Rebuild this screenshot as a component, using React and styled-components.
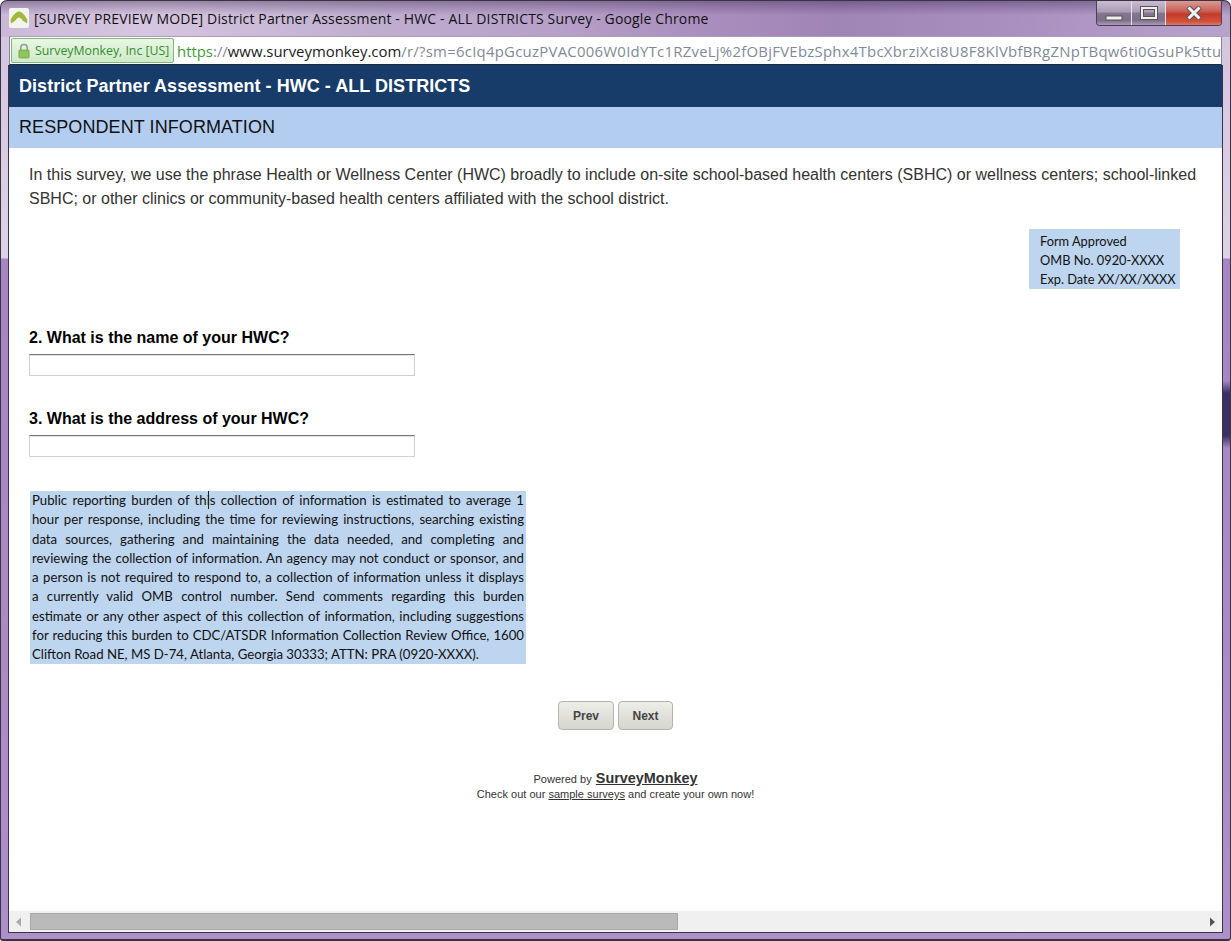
import React from 'react';
import styled, { createGlobalStyle } from 'styled-components'

const GlobalStyle = createGlobalStyle`
  html, body { margin: 0; padding: 0; background: #fff; }
  body { font-family: "Liberation Sans", Arial, sans-serif; overflow: hidden; }
`

const Window = styled.div`
  box-sizing: border-box;
  width: 1231px;
  height: 941px;
  display: flex;
  flex-direction: column;
  padding: 0 8px 6px 8px;
  border: 1px solid #3a3340;
  border-bottom-width: 2px;
  border-radius: 7px 7px 3px 3px;
  background:
    linear-gradient(180deg, transparent 380px, #3a3262 392px, #3a3262 435px, transparent 447px) right top / 7px 100% no-repeat,
    linear-gradient(180deg, rgba(60,40,80,0.4), rgba(60,40,80,0) 14px) left top / 100% 36px no-repeat,
    linear-gradient(95deg, #cbb8d8 0%, #d6c6e0 12%, #c0aed0 30%, #b7a0c9 45%, #a88dbd 58%, #9f84b6 68%, #a98fc0 82%, #b9a2cc 100%) left top / 100% 36px no-repeat,
    linear-gradient(180deg, #d3c4de 0, #ddd2e8 257px, #a585c2 258px, #ad8fc9 100%);
`
const TitleBar = styled.div`
  display: flex;
  align-items: flex-start;
  height: 35px;
  flex: none;
`
const AppIcon = styled.svg`
  width: 20px;
  height: 20px;
  margin: 7px 5px 0 0;
  flex: none;
`
const WindowTitle = styled.div`
  font-family: "Open Sans", "Noto Sans", sans-serif;
  font-size: 14px;
  line-height: 19px;
  margin-top: 8px;
  color: #111;
  white-space: nowrap;
  letter-spacing: 0.15px;
`
const WindowButtons = styled.div`
  display: flex;
  margin-left: auto;
  height: 24px;
  border: 1px solid #4a3f55;
  border-top: none;
  border-radius: 0 0 4px 4px;
  overflow: hidden;
`
const WindowButton = styled.div`
  width: ${p => p.$w}px;
  display: flex;
  align-items: center;
  justify-content: center;
  background: ${p => p.$close
    ? 'linear-gradient(180deg, #dc9a92 0%, #c9655a 40%, #c33b28 55%, #d4503c 85%, #d8796b 100%)'
    : 'linear-gradient(180deg, #c9bcd2 0%, #ab9cb6 45%, #85758f 52%, #7d6e8a 80%, #a99ab5 100%)'};
  border-right: ${p => p.$close ? 'none' : '1px solid #e6dfea'};
`
const MinimizeGlyph = styled.svg`
  margin-top: 10px;
`
const AddressBar = styled.div`
  flex: none;
  display: flex;
  align-items: center;
  height: 29px;
  box-sizing: border-box;
  background: #fff;
  border: 1px solid #8d8398;
  border-top-color: #a9a0b3;
  border-bottom: 1px solid #1f2a3d;
  overflow: hidden;
`
const SecureBadge = styled.div`
  display: flex;
  align-items: center;
  flex: none;
  box-sizing: border-box;
  height: 25px;
  width: 163px;
  padding-left: 6px;
  gap: 5px;
  margin-left: 1px;
  background: linear-gradient(180deg, #e9f6e4, #cfeac8);
  border: 1px solid #7cb87a;
  border-radius: 2px;
  font-family: "Open Sans", "Noto Sans", sans-serif;
  font-size: 12.3px;
  color: #2f8f2b;
  white-space: nowrap;
`
const Url = styled.div`
  font-family: "Open Sans", "Noto Sans", sans-serif;
  font-size: 14.9px;
  margin-left: 3px;
  white-space: nowrap;
  color: #808a96;
`
const Https = styled.span`
  color: #3f9a3a;
`
const Host = styled.span`
  color: #222;
`
const UrlRest = styled.span`
  letter-spacing: 0.27px;
`
const Page = styled.div`
  flex: 1;
  display: flex;
  flex-direction: column;
  min-height: 0;
  background: #fff;
  border-bottom: 1px solid #3a3340;
  border-left: 1px solid #3a3340;
  border-right: 1px solid #3a3340;
  margin: 0 -1px 0 -1px;
`
const SurveyHeader = styled.div`
  flex: none;
  height: 42px;
  display: flex;
  align-items: center;
  padding-left: 10px;
  background: #173c69;
  color: #fff;
  font-size: 18px;
  font-weight: bold;
  letter-spacing: 0.04px;
`
const SectionHeader = styled.div`
  flex: none;
  height: 41px;
  display: flex;
  align-items: center;
  padding-left: 10px;
  background: #b3cdf1;
  color: #111;
  font-size: 18px;
  letter-spacing: 0.08px;
`
const Content = styled.div`
  flex: 1;
  min-height: 0;
  padding: 15px 20px 0 20px;
  display: flex;
  flex-direction: column;
`
const Intro = styled.p`
  margin: 0;
  font-size: 16px;
  line-height: 24px;
  color: #333;
`
const ApprovalBox = styled.div`
  align-self: flex-end;
  box-sizing: border-box;
  width: 151px;
  height: 60px;
  margin: 18px 22px 0 0;
  padding: 3px 0 0 11px;
  background: #bdd5ee;
  font-family: Lato, "Noto Sans", sans-serif;
  font-size: 12.8px;
  line-height: 19px;
  color: #111;
  white-space: nowrap;
`
const Question = styled.div`
  display: flex;
  flex-direction: column;
  margin-top: ${p => p.$top}px;
`
const QuestionLabel = styled.label`
  font-size: 16px;
  font-weight: bold;
  line-height: 20px;
  color: #000;
`
const TextBox = styled.div`
  box-sizing: border-box;
  width: 386px;
  height: 22px;
  margin-top: 6px;
  background: #fff;
  border: 1px solid #d0d0d0;
  border-top: 1px solid #777;
  box-shadow: inset 0 1px 1px #e2e2e2;
`
const BurdenNotice = styled.div`
  box-sizing: border-box;
  position: relative;
  width: 496px;
  height: 173px;
  margin: 34px 0 0 1px;
  padding: 0 2px;
  background: #bdd5ee;
  font-family: Lato, "Noto Sans", sans-serif;
  font-size: 13.2px;
  line-height: 19.25px;
  color: #111;
`
const NoticeLine = styled.div`
  text-align: justify;
  text-align-last: ${p => p.$last ? 'left' : 'justify'};
`
const TextCursor = styled.span`
  position: absolute;
  left: 178px;
  top: 0;
  width: 1px;
  height: 18px;
  background: #222;
`
const Nav = styled.div`
  display: flex;
  justify-content: center;
  gap: 4px;
  margin-top: 37px;
`
const NavButton = styled.button`
  box-sizing: border-box;
  width: ${p => p.$w}px;
  height: 29px;
  padding: 0;
  background: linear-gradient(180deg, #ededea, #d6d5cd);
  border: 1px solid #b4b4ac;
  border-radius: 4px;
  font-family: "Liberation Sans", Arial, sans-serif;
  font-size: 12px;
  font-weight: bold;
  color: #444;
`
const Footer = styled.div`
  margin-top: 41px;
  text-align: center;
  font-size: 11px;
  line-height: 15px;
  color: #333;
  letter-spacing: 0.01px;
`
const BrandLink = styled.a`
  font-size: 14.4px;
  font-weight: bold;
  color: #333;
  text-decoration: underline;
  margin-left: 1px;
`
const SampleLink = styled.a`
  color: #333;
  text-decoration: underline;
`
const HScroll = styled.div`
  flex: none;
  height: 21px;
  display: flex;
  align-items: center;
  background: #f0f0f0;
  box-sizing: border-box;
`
const ScrollArrow = styled.svg`
  flex: none;
  width: 21px;
  height: 10px;
`
const ScrollThumb = styled.div`
  box-sizing: border-box;
  width: 648px;
  height: 17px;
  background: #bababa;
  border: 1px solid #a8a8a8;
`
const ScrollSpace = styled.div`
  flex: 1;
`

const noticeLines = [
  'Public reporting burden of this collection of information is estimated to average 1',
  'hour per response, including the time for reviewing instructions, searching existing',
  'data sources, gathering and maintaining the data needed, and completing and',
  'reviewing the collection of information. An agency may not conduct or sponsor, and',
  'a person is not required to respond to, a collection of information unless it displays',
  'a currently valid OMB control number. Send comments regarding this burden',
  'estimate or any other aspect of this collection of information, including suggestions',
  'for reducing this burden to CDC/ATSDR Information Collection Review Office, 1600',
  'Clifton Road NE, MS D-74, Atlanta, Georgia 30333; ATTN: PRA (0920-XXXX).',
]

const App = () => {
  return (
    <>
      <GlobalStyle />
      <Window>
        <TitleBar>
          <AppIcon viewBox="0 0 20 20">
            <rect x="0" y="0" width="20" height="20" rx="2" fill="#f4f4ee" />
            <path d="M1.5 12 C3 9 6.5 3.5 10 3.5 C13.5 3.5 17 9 18.5 12 L18 15.5 L13.5 12.5 C12.5 10.5 11 9.5 10 9.5 C9 9.5 7.5 10.5 6.5 12.5 L2 15.5 Z" fill="#a3b83a" />
          </AppIcon>
          <WindowTitle>[SURVEY PREVIEW MODE] District Partner Assessment - HWC - ALL DISTRICTS Survey - Google Chrome</WindowTitle>
          <WindowButtons>
            <WindowButton $w={34}>
              <MinimizeGlyph width="18" height="6" viewBox="0 0 18 6"><rect x="1" y="1" width="16" height="4" fill="#eee" stroke="#555" strokeWidth="1" /></MinimizeGlyph>
            </WindowButton>
            <WindowButton $w={33}>
              <svg width="18" height="14" viewBox="0 0 18 14"><rect x="2" y="2" width="14" height="10" fill="none" stroke="#555" strokeWidth="4" /><rect x="2" y="2" width="14" height="10" fill="none" stroke="#eee" strokeWidth="2" /></svg>
            </WindowButton>
            <WindowButton $w={55} $close>
              <svg width="18" height="14" viewBox="0 0 18 14"><path d="M3 1 L15 13 M15 1 L3 13" stroke="#555" strokeWidth="5" /><path d="M3.5 1.5 L14.5 12.5 M14.5 1.5 L3.5 12.5" stroke="#f2f2f2" strokeWidth="3" /></svg>
            </WindowButton>
          </WindowButtons>
        </TitleBar>
        <AddressBar>
          <SecureBadge>
            <svg width="12" height="16" viewBox="0 0 13 16">
              <path d="M3 7 V4.5 a3.5 3.5 0 0 1 7 0 V7" fill="none" stroke="#8f9a8f" strokeWidth="1.6" />
              <rect x="1" y="7" width="11" height="8.5" rx="1" fill="#8fc75a" stroke="#6b9a45" strokeWidth="0.8" />
            </svg>
            SurveyMonkey, Inc [US]
          </SecureBadge>
          <Url><Https>https</Https>://<Host>www.surveymonkey.com</Host><UrlRest>/r/?sm=6cIq4pGcuzPVAC006W0IdYTc1RZveLj%2fOBjFVEbzSphx4TbcXbrziXci8U8F8KlVbfBRgZNpTBqw6ti0GsuPk5ttu</UrlRest></Url>
        </AddressBar>
        <Page>
          <SurveyHeader>District Partner Assessment - HWC - ALL DISTRICTS</SurveyHeader>
          <SectionHeader>RESPONDENT INFORMATION</SectionHeader>
          <Content>
            <Intro>In this survey, we use the phrase Health or Wellness Center (HWC) broadly to include on-site school-based health centers (SBHC) or wellness centers; school-linked SBHC; or other clinics or community-based health centers affiliated with the school district.</Intro>
            <ApprovalBox>
              Form Approved<br />
              OMB No. 0920-XXXX<br />
              Exp. Date XX/XX/XXXX
            </ApprovalBox>
            <Question $top={39}>
              <QuestionLabel>2. What is the name of your HWC?</QuestionLabel>
              <TextBox />
            </Question>
            <Question $top={33}>
              <QuestionLabel>3. What is the address of your HWC?</QuestionLabel>
              <TextBox />
            </Question>
            <BurdenNotice>
              <TextCursor />
              {noticeLines.map((line, i) => (
                <NoticeLine key={i} $last={i === noticeLines.length - 1}>{line}</NoticeLine>
              ))}
            </BurdenNotice>
            <Nav>
              <NavButton $w={56}>Prev</NavButton>
              <NavButton $w={55}>Next</NavButton>
            </Nav>
            <Footer>
              Powered by <BrandLink>SurveyMonkey</BrandLink><br />
              Check out our <SampleLink>sample surveys</SampleLink> and create your own now!
            </Footer>
          </Content>
          <HScroll>
            <ScrollArrow viewBox="0 0 21 10"><path d="M7 5 L12 0.5 V9.5 Z" fill="#aaa" /></ScrollArrow>
            <ScrollThumb />
            <ScrollSpace />
            <ScrollArrow viewBox="0 0 21 10"><path d="M14 5 L9 0.5 V9.5 Z" fill="#555" /></ScrollArrow>
          </HScroll>
        </Page>
      </Window>
    </>
  )
}

export default App;
